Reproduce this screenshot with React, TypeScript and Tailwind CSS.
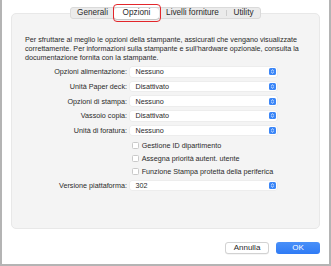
import React from "react";

const Stepper = () => (
  <svg width="7" height="7" viewBox="0 0 7 7" className="block">
    <rect width="7" height="7" rx="1.6" fill="#3b86f7" />
    <path d="M2.2 3 L3.5 1.8 L4.8 3" stroke="white" strokeWidth="0.8" fill="none" />
    <path d="M2.2 4 L3.5 5.2 L4.8 4" stroke="white" strokeWidth="0.8" fill="none" />
  </svg>
);

const PopupRow = ({ label, value }: { label: string; value: string }) => (
  <div className="flex items-center h-[14.6px] gap-[3px]">
    <div className="w-[115px] text-right whitespace-nowrap text-[#2a2a2a]">{label}</div>
    <div className="w-[147px] h-[9.5px] bg-white rounded-[2px] shadow-[0_0_0_0.5px_rgba(0,0,0,0.06)] flex items-center justify-between pl-[5.5px] pr-[1.5px]">
      <span className="text-[#2a2a2a] whitespace-nowrap">{value}</span>
      <Stepper />
    </div>
  </div>
);

const CheckRow = ({ label }: { label: string }) => (
  <div className="flex items-center h-[13px] pl-[120px] gap-[2.7px]">
    <div className="w-[7px] h-[7px] bg-white border border-[#c9c9c9] rounded-[1.5px]" />
    <span className="whitespace-nowrap text-[#2a2a2a]">{label}</span>
  </div>
);

export default function App() {
  return (
    <div className="w-[331px] h-[266px] bg-white border-l-2 border-r-2 border-b-2 border-[#b4b4b4] font-['Liberation_Sans',Arial,sans-serif] flex flex-col pt-[7px]">
      <div className="relative z-10 flex h-[12px] w-[191px] ml-[68px] items-center rounded-[3px] bg-[#ebebeb] border border-[#dadada] text-[8.2px] text-[#2a2a2a]">
        <div className="w-[43px] flex items-center justify-center">Generali</div>
        <div className="relative w-[45px] h-[11px] flex items-center justify-center bg-white rounded-[3px] shadow-[0_0.5px_1px_rgba(0,0,0,0.2)]">
          Opzioni
          <div className="absolute -left-[1.5px] -right-[1.5px] -top-[3.5px] -bottom-[3.5px] border-[1.5px] border-[#e3262b] rounded-[4px]" />
        </div>
        <div className="w-[67px] flex items-center justify-center">Livelli forniture</div>
        <div className="w-px h-[6px] bg-[#cdcdcd]" />
        <div className="flex-1 flex items-center justify-center">Utility</div>
      </div>

      <div className="-mt-[6px] mx-[9px] h-[216px] bg-[#f4f4f4] border border-[#e8e8e8] rounded-[5px] text-[7.2px] leading-[9px] flex flex-col">
        <p className="pt-[20.5px] pl-[13px] text-[#2a2a2a] whitespace-nowrap">
          Per sfruttare al meglio le opzioni della stampante, assicurati che vengano visualizzate
          <br />
          correttamente. Per informazioni sulla stampante e sull'hardware opzionale, consulta la
          <br />
          documentazione fornita con la stampante.
        </p>
        <div className="mt-[3.2px] flex flex-col">
          <PopupRow label="Opzioni alimentazione:" value="Nessuno" />
          <PopupRow label="Unità Paper deck:" value="Disattivato" />
          <PopupRow label="Opzioni di stampa:" value="Nessuno" />
          <PopupRow label="Vassoio copia:" value="Disattivato" />
          <PopupRow label="Unità di foratura:" value="Nessuno" />
          <div className="mt-[1.5px] flex flex-col">
            <CheckRow label="Gestione ID dipartimento" />
            <CheckRow label="Assegna priorità autent. utente" />
            <CheckRow label="Funzione Stampa protetta della periferica" />
          </div>
          <PopupRow label="Versione piattaforma:" value="302" />
        </div>
      </div>

      <div className="mt-[13px] mr-[9px] flex justify-end gap-[7px] text-[8px]">
        <div className="w-[44px] h-[12px] bg-white border border-[#d2d2d2] rounded-[3px] shadow-[0_0.5px_0.5px_rgba(0,0,0,0.08)] flex items-center justify-center text-[#2a2a2a]">
          Annulla
        </div>
        <div className="w-[44px] h-[12px] bg-[linear-gradient(#4a90f8,#2f7bf5)] rounded-[3px] flex items-center justify-center text-white">
          OK
        </div>
      </div>
    </div>
  );
}
